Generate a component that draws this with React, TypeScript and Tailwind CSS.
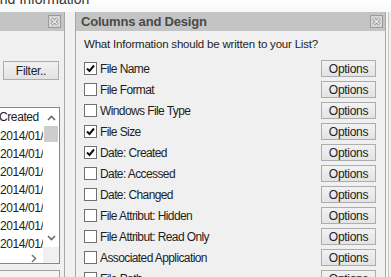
import React from "react"

const rows: { label: string; checked: boolean }[] = [
  { label: "File Name", checked: true },
  { label: "File Format", checked: false },
  { label: "Windows File Type", checked: false },
  { label: "File Size", checked: true },
  { label: "Date: Created", checked: true },
  { label: "Date: Accessed", checked: false },
  { label: "Date: Changed", checked: false },
  { label: "File Attribut: Hidden", checked: false },
  { label: "File Attribut: Read Only", checked: false },
  { label: "Associated Application", checked: false },
  { label: "File Path", checked: false },
]

const CloseBox = () => (
  <svg width="13" height="13" viewBox="0 0 13 13">
    <rect x="0.5" y="0.5" width="12" height="12" fill="#d6d6d6" stroke="#9a9a9a" />
    <path d="M3.5 3.5 L9.5 9.5 M9.5 3.5 L3.5 9.5" stroke="#8c8c8c" strokeWidth="3" />
    <path d="M3.5 3.5 L9.5 9.5 M9.5 3.5 L3.5 9.5" stroke="#f2f2f2" strokeWidth="1.2" />
  </svg>
)

const Check = ({ checked }: { checked: boolean }) => (
  <div className="w-[13px] h-[13px] border border-[#707070] bg-white flex items-center justify-center shrink-0">
    {checked && (
      <svg width="9" height="9" viewBox="0 0 9 9">
        <path d="M1 4.5 L3.5 7 L8 1.5" stroke="#111" strokeWidth="2" fill="none" />
      </svg>
    )}
  </div>
)

const OptionsButton = () => (
  <div className="w-[55px] h-[17px] border border-[#adadad] bg-gradient-to-b from-[#f2f2f2] to-[#e3e3e3] flex items-center justify-center text-[12px] tracking-[-0.3px] text-[#222] leading-none">
    Options
  </div>
)

export default function App() {
  return (
    <div className="w-[391px] h-[277px] overflow-hidden bg-[#f0f0f0] flex flex-col font-['Liberation_Sans',Arial,sans-serif]">
      {/* window title, cut off at the top */}
      <div className="h-[12px] bg-gradient-to-b from-[#ffffff] to-[#f6f8fa] overflow-hidden shrink-0">
        <div className="-mt-[11px] -ml-[8px] text-[14px] text-[#333] whitespace-nowrap">and Information</div>
      </div>

      <div className="flex flex-1 min-h-0">
        {/* left panel */}
        <div className="w-[65px] shrink-0 border-r border-[#a8a8a8] flex flex-col">
          <div className="h-[19px] bg-[#c4c4c4] flex items-center justify-end pr-[3px] shrink-0">
            <CloseBox />
          </div>
          <div className="flex flex-col pt-[30px]">
            <div className="ml-[3px] w-[56px] h-[19px] border border-[#adadad] bg-gradient-to-b from-[#f2f2f2] to-[#e3e3e3] flex items-center justify-center text-[12px] tracking-[-0.3px] text-[#222]">
              Filter..
            </div>
            <div className="mt-[27px] mr-[4px] h-[157px] border border-[#828790] border-l-0 bg-white flex">
              <div className="flex-1 flex flex-col overflow-hidden">
                <div className="h-[20px] flex items-center text-[12px] tracking-[-0.4px] text-[#222] whitespace-nowrap -ml-[1px]">Created</div>
                <div className="flex-1 flex flex-col pt-[1px]">
                  {Array.from({ length: 7 }).map((_, i) => (
                    <div key={i} className="h-[18px] flex items-center text-[12px] tracking-[-0.4px] text-[#222] whitespace-nowrap">
                      2014/01/
                    </div>
                  ))}
                </div>
                <div className="h-[16px] flex items-center justify-end pr-[6px]">
                  <svg width="6" height="9" viewBox="0 0 6 9">
                    <path d="M1 1 L4.5 4.5 L1 8" stroke="#7a7a7a" strokeWidth="1.6" fill="none" />
                  </svg>
                </div>
              </div>
              <div className="w-[16px] flex flex-col bg-white">
                <div className="h-[18px] flex items-center justify-center pt-[2px]">
                  <svg width="9" height="6" viewBox="0 0 9 6">
                    <path d="M1 5 L4.5 1.5 L8 5" stroke="#6a6a6a" strokeWidth="1.6" fill="none" />
                  </svg>
                </div>
                <div className="h-[16px] bg-[#cdcdcd] mx-[1px]" />
                <div className="flex-1" />
                <div className="h-[18px] flex items-center justify-center">
                  <svg width="9" height="6" viewBox="0 0 9 6">
                    <path d="M1 1 L4.5 4.5 L8 1" stroke="#6a6a6a" strokeWidth="1.6" fill="none" />
                  </svg>
                </div>
                <div className="h-[16px] bg-[#f0f0f0]" />
              </div>
            </div>
            <div className="mt-[6px] mr-[4px] h-[20px] border border-[#a0a0a0] border-l-0 bg-[#f4f4f4]" />
          </div>
        </div>

        <div className="w-[10px] shrink-0" />

        {/* right panel */}
        <div className="w-[311px] shrink-0 border-l border-r border-[#a8a8a8] flex flex-col">
          <div className="h-[19px] bg-[#c4c4c4] flex items-center justify-between pl-[5px] pr-[2px] shrink-0">
            <span className="text-[13px] font-bold tracking-[-0.2px] text-[#4a4a4a] leading-none">Columns and Design</span>
            <CloseBox />
          </div>
          <div className="flex flex-col pl-[8px] pr-[9px] pt-[7px]">
            <div className="h-[14px] flex items-center text-[11.5px] tracking-[-0.2px] text-[#1e1e1e]">
              What Information should be written to your List?
            </div>
            <div className="flex flex-col pt-[8px]">
              {rows.map((r) => (
                <div key={r.label} className="h-[21px] flex items-start justify-between">
                  <div className="flex items-center gap-[3px] pt-[2px]">
                    <Check checked={r.checked} />
                    <span className="text-[12px] tracking-[-0.6px] text-[#1e1e1e] leading-none">{r.label}</span>
                  </div>
                  <OptionsButton />
                </div>
              ))}
            </div>
          </div>
        </div>

        {/* right edge */}
        <div className="flex-1 bg-[#f6f6f6] border-r border-[#c8c8c8] mr-[2px]" />
      </div>
    </div>
  )
}
